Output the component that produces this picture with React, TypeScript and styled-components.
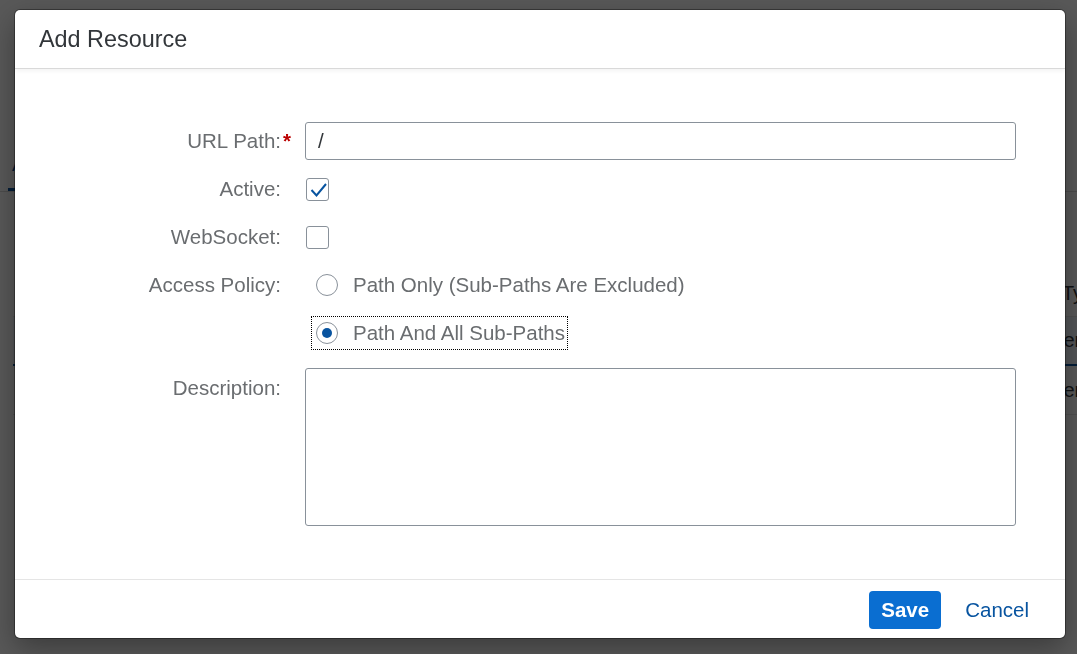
import React from 'react'
import styled, { createGlobalStyle } from 'styled-components'

const FONT = `"Liberation Sans", Arial, sans-serif`

const GlobalStyle = createGlobalStyle`
  html, body {
    margin: 0;
    padding: 0;
  }

  body {
    font-family: ${FONT};
    background-color: #ffffff;
  }

  * {
    box-sizing: border-box;
  }
`

/* page behind the dialog, mostly hidden by it */

const Page = styled.div`
  display: flex;
  flex-direction: column;
  height: 100vh;
  overflow: hidden;
  background-color: #ffffff;
  color: #32363a;
  font-size: 20px;
`

const TabBar = styled.div`
  display: flex;
  align-items: flex-end;
  height: 52px;
  margin-top: 140px;
  padding-left: 8px;
  border-bottom: 1px solid #d9d9d9;
`

const Tab = styled.div`
  display: flex;
  align-items: center;
  height: 51px;
  padding: 0 4px;
  color: #0854a0;
  border-bottom: 3px solid #0854a0;
`

const Table = styled.div`
  margin: 78px 0 0 13px;
`

const TableRow = styled.div<{ $selected?: boolean; $header?: boolean }>`
  display: grid;
  grid-template-columns: 1018px 1fr;
  height: ${({ $header }) => ($header ? 47 : 49)}px;
  align-items: center;
  white-space: nowrap;
  background-color: ${({ $selected }) => ($selected ? '#eef4fa' : '#ffffff')};
  border-bottom: ${({ $selected }) => ($selected ? '2px solid #0854a0' : '1px solid #e5e5e5')};
`

const Cell = styled.div<{ $indent?: number }>`
  padding-left: ${({ $indent }) => $indent ?? 8}px;
  overflow: hidden;
`

/* dialog */

const Overlay = styled.div`
  position: fixed;
  inset: 0;
  display: flex;
  align-items: flex-start;
  padding: 10px 0 0 15px;
  background-color: rgba(0, 0, 0, 0.655);
`

const Dialog = styled.div`
  display: flex;
  flex-direction: column;
  width: 1050px;
  height: 628px;
  background-color: #ffffff;
  border-radius: 5px;
  box-shadow: 0 0 0 1px rgba(0, 0, 0, 0.35), 0 10px 30px rgba(0, 0, 0, 0.35);
  overflow: hidden;
`

const Header = styled.header`
  position: relative;
  display: flex;
  align-items: center;
  height: 59px;
  padding: 0 24px;
  border-bottom: 1px solid #d9d9d9;
  box-shadow: 0 2px 4px rgba(0, 0, 0, 0.05);
`

const Title = styled.h1`
  margin: 0;
  font-size: 23.4px;
  font-weight: 400;
  color: #32363a;
`

const Content = styled.div`
  flex: 1;
  display: flex;
  flex-direction: column;
  padding: 48px 49px 0 0;
`

const FormRow = styled.div<{ $top?: boolean }>`
  display: grid;
  grid-template-columns: 278px 1fr;
  column-gap: 12px;
  min-height: 48px;
  align-items: ${({ $top }) => ($top ? 'start' : 'center')};
  margin-top: ${({ $top }) => ($top ? 11 : 0)}px;
`

const Label = styled.label<{ $top?: boolean }>`
  padding: ${({ $top }) => ($top ? '8px' : '0')} 12px 0 0;
  text-align: right;
  font-size: 20.5px;
  line-height: 24px;
  color: #6a6d70;
  white-space: nowrap;
`

const Required = styled.span`
  margin: 0 -10px 0 2px;
  color: #bb0000;
  font-weight: 700;
`

const TextInput = styled.input`
  width: 100%;
  height: 38px;
  padding: 0 12px;
  border: 1px solid #89919a;
  border-radius: 3px;
  font-family: ${FONT};
  font-size: 20.5px;
  color: #32363a;
  background-color: #ffffff;
  outline: none;
`

const TextArea = styled.textarea`
  display: block;
  width: 100%;
  height: 158px;
  padding: 8px 12px;
  border: 1px solid #89919a;
  border-radius: 3px;
  font-family: ${FONT};
  font-size: 20.5px;
  color: #32363a;
  resize: none;
  outline: none;
`

const CheckBox = styled.span`
  display: flex;
  align-items: center;
  justify-content: center;
  width: 23px;
  height: 23px;
  margin-left: 1px;
  border: 1px solid #89919a;
  border-radius: 3px;
  background-color: #ffffff;
`

const RadioItem = styled.label<{ $focused?: boolean }>`
  display: inline-flex;
  align-items: center;
  gap: 15px;
  width: fit-content;
  height: 32px;
  margin-left: 7px;
  padding: 0 2px 0 4px;
  outline: ${({ $focused }) => ($focused ? '1px dotted #000000' : 'none')};
  cursor: pointer;
`

const RadioCircle = styled.span`
  display: flex;
  align-items: center;
  justify-content: center;
  width: 22px;
  height: 22px;
  border: 1px solid #89919a;
  border-radius: 50%;
  background-color: #ffffff;
`

const RadioDot = styled.span`
  width: 10px;
  height: 10px;
  border-radius: 50%;
  background-color: #0854a0;
`

const RadioText = styled.span`
  font-size: 20.5px;
  color: #6a6d70;
  white-space: nowrap;
`

const Footer = styled.footer`
  display: flex;
  align-items: center;
  justify-content: flex-end;
  gap: 12px;
  height: 59px;
  padding: 2px 24px 0;
  border-top: 1px solid #e5e5e5;
`

const Button = styled.button<{ $primary?: boolean }>`
  height: 38px;
  padding: 0 12px;
  border: none;
  border-radius: 4px;
  font-family: ${FONT};
  font-size: 20.5px;
  font-weight: ${({ $primary }) => ($primary ? 700 : 400)};
  color: ${({ $primary }) => ($primary ? '#ffffff' : '#0854a0')};
  background-color: ${({ $primary }) => ($primary ? '#0a6ed1' : 'transparent')};
  cursor: pointer;
`

function Check() {
  return (
    <svg width="21" height="21" viewBox="0 0 21 21">
      <path d="M4.5 11 L9.5 16.5 L19 5" fill="none" stroke="#0854a0" strokeWidth="2" />
    </svg>
  )
}

type RadioProps = {
  label: string
  checked?: boolean
  focused?: boolean
}

function Radio({ label, checked, focused }: RadioProps) {
  return (
    <RadioItem $focused={focused}>
      <RadioCircle>{checked && <RadioDot />}</RadioCircle>
      <RadioText>{label}</RadioText>
    </RadioItem>
  )
}

function Background() {
  return (
    <Page>
      <TabBar>
        <Tab>Attributes</Tab>
      </TabBar>
      <Table>
        <TableRow $header>
          <Cell>Name</Cell>
          <Cell $indent={31}>Type</Cell>
        </TableRow>
        <TableRow $selected>
          <Cell>/</Cell>
          <Cell>User</Cell>
        </TableRow>
        <TableRow>
          <Cell>/api</Cell>
          <Cell>User</Cell>
        </TableRow>
      </Table>
    </Page>
  )
}

export default function App() {
  return (
    <>
      <GlobalStyle />
      <Background />
      <Overlay>
        <Dialog role="dialog">
          <Header>
            <Title>Add Resource</Title>
          </Header>
          <Content>
            <FormRow>
              <Label>
                URL Path:<Required>*</Required>
              </Label>
              <TextInput defaultValue="/" />
            </FormRow>
            <FormRow>
              <Label>Active:</Label>
              <CheckBox>
                <Check />
              </CheckBox>
            </FormRow>
            <FormRow>
              <Label>WebSocket:</Label>
              <CheckBox />
            </FormRow>
            <FormRow>
              <Label>Access Policy:</Label>
              <Radio label="Path Only (Sub-Paths Are Excluded)" />
            </FormRow>
            <FormRow>
              <span />
              <Radio label="Path And All Sub-Paths" checked focused />
            </FormRow>
            <FormRow $top>
              <Label $top>Description:</Label>
              <TextArea />
            </FormRow>
          </Content>
          <Footer>
            <Button $primary>Save</Button>
            <Button>Cancel</Button>
          </Footer>
        </Dialog>
      </Overlay>
    </>
  )
}
